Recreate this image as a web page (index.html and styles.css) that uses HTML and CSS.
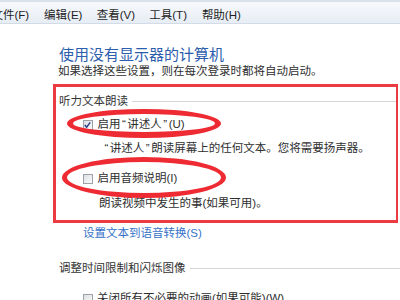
FILE: index.html
```html
<!DOCTYPE html>
<html lang="zh">
<head>
<meta charset="utf-8">
<link rel="stylesheet" href="styles.css">
</head>
<body>
<div class="page">
  <div class="menubar">
    <span class="menu-item">文件(F)</span>
    <span class="menu-item">编辑(E)</span>
    <span class="menu-item">查看(V)</span>
    <span class="menu-item">工具(T)</span>
    <span class="menu-item">帮助(H)</span>
  </div>
  <div class="content">
    <h1 class="title">使用没有显示器的计算机</h1>
    <p class="intro">如果选择这些设置，则在每次登录时都将自动启动。</p>
    <div class="highlight">
      <div class="group-head"><span>听力文本朗读</span><span class="rule"></span></div>
      <div class="option option1"><span class="checkbox checked"><svg viewBox="0 0 10 10" width="10" height="10"><path d="M2 5 L4 7.5 L8 2" fill="none" stroke="#2b3f8c" stroke-width="1.6"/></svg></span><span>启用<span class="q">“</span>讲述人<span class="q">”</span>(U)</span></div>
      <div class="desc desc1"><span class="q">“</span>讲述人<span class="q">”</span>朗读屏幕上的任何文本。您将需要扬声器。</div>
      <div class="option option2"><span class="checkbox"></span><span>启用音频说明(I)</span></div>
      <div class="desc desc2">朗读视频中发生的事(如果可用)。</div>
    </div>
    <div class="link">设置文本到语音转换(S)</div>
    <div class="group-head section2"><span>调整时间限制和闪烁图像</span><span class="rule"></span></div>
    <div class="option option3"><span class="checkbox"></span><span>关闭所有不必要的动画(如果可能)(W)</span></div>
  </div>
  <div class="ring ring1"></div>
  <div class="ring ring2"></div>
</div>
</body>
</html>
```

FILE: styles.css
```css
html, body {
  margin: 0;
  padding: 0;
  background: #ffffff;
}
.page {
  position: relative;
  width: 400px;
  height: 300px;
  overflow: hidden;
  font-family: "Liberation Sans", "Noto Sans CJK SC", sans-serif;
  font-size: 11.5px;
  line-height: 20px;
  color: #2e2e2e;
}
.menubar {
  height: 24px;
  box-sizing: border-box;
  border-top: 2px solid #d9e1eb;
  border-bottom: 1px solid #d3dbe6;
  background: linear-gradient(#f7f9fc, #e7edf5);
  display: flex;
  align-items: center;
  padding-top: 5px;
  margin-left: -8.5px;
}
.menu-item {
  flex: none;
  width: 52.6px;
  color: #1e1e1e;
  line-height: 16px;
  white-space: nowrap;
}
.content {
  padding-left: 58px;
}
.title {
  margin: 0;
  padding-top: 20px;
  padding-left: 1px;
  font-family: "Noto Sans CJK SC", sans-serif;
  font-size: 15px;
  font-weight: normal;
  line-height: 20px;
  color: #2c5ead;
}
.intro {
  margin: 0;
  line-height: 15px;
}
.highlight {
  margin-left: -5px;
  margin-top: 5px;
  width: 345px;
  height: 139px;
  box-sizing: border-box;
  border: 3px solid #ec3a42;
  border-right-width: 2px;
  padding: 4px 0 0 3px;
}
.q {
  padding: 0 1.5px;
}
.group-head {
  display: flex;
  align-items: center;
  gap: 4px;
  height: 20px;
  color: #333;
}
.rule {
  flex: 1;
  height: 1px;
  background: #d6d6d6;
  margin-top: 1px;
}
.option {
  display: flex;
  align-items: center;
  gap: 4.5px;
  margin-left: 24px;
  height: 20px;
}
.option1 {
  margin-top: 3px;
}
.checkbox {
  width: 10px;
  height: 10px;
  margin-top: 2px;
  box-sizing: border-box;
  border: 1px solid #9ca2a8;
  background: linear-gradient(135deg, #dcdfe3, #fafbfc);
  display: inline-flex;
  flex: none;
}
.checkbox svg {
  margin: -1px 0 0 -1px;
}
.desc {
  height: 20px;
}
.desc1 {
  margin-left: 44px;
  margin-top: 4px;
}
.option2 {
  margin-top: 10px;
}
.desc2 {
  margin-left: 40px;
  margin-top: 5px;
}
.link {
  margin-left: 25px;
  height: 20px;
  color: #3672c8;
}
.section2 {
  margin-top: 15px;
  margin-left: 1px;
}
.option3 {
  margin-left: 25px;
  margin-top: 10px;
  gap: 4px;
}
.ring {
  position: absolute;
  box-sizing: border-box;
  border: 5px solid #ee2a33;
  border-radius: 50%;
}
.ring1 {
  left: 67px;
  top: 109px;
  width: 154px;
  height: 29px;
  border-width: 5px 6px 6px 6px;
}
.ring2 {
  left: 62px;
  top: 157px;
  width: 164px;
  height: 41px;
}
```
